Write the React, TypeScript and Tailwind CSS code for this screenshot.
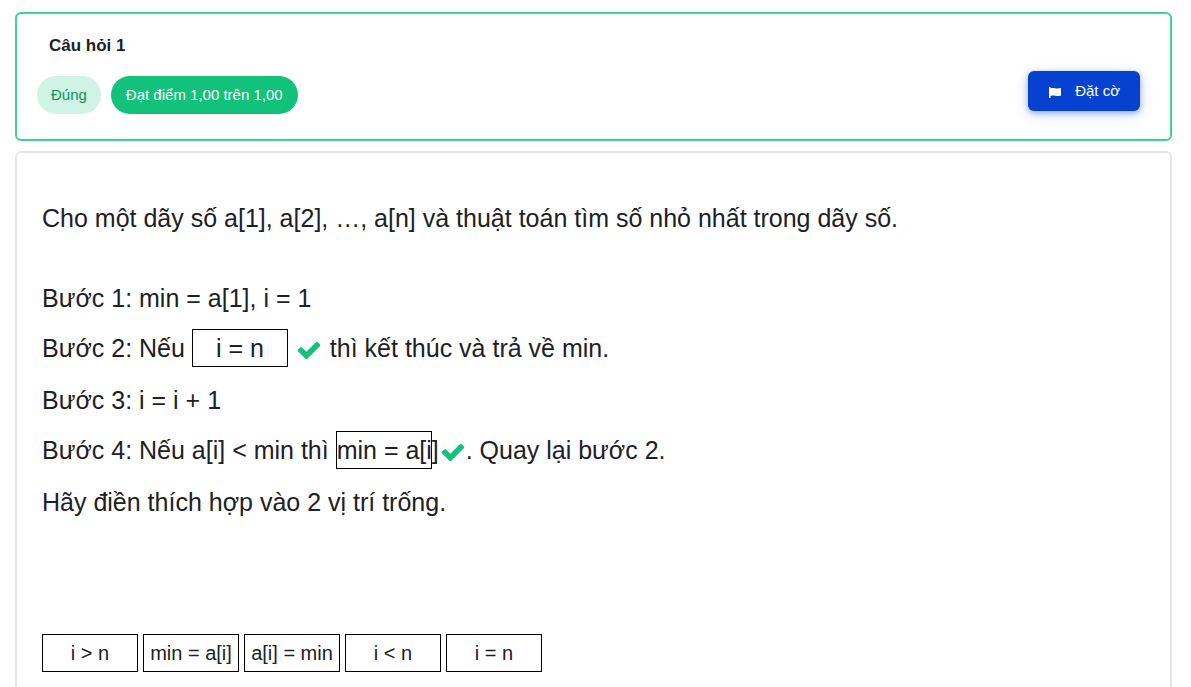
import type { ReactNode } from "react";

const choices = ["i > n", "min = a[i]", "a[i] = min", "i < n", "i = n"];

function Blank({ children }: { children: ReactNode }) {
  return (
    <span className="inline-block h-[38px] w-24 border border-black text-center leading-9 whitespace-nowrap">
      {children}
    </span>
  );
}

function Correct() {
  return (
    <svg
      viewBox="0 0 1792 1792"
      role="img"
      aria-label="Đúng"
      className="inline size-[26px] align-middle text-[#12c27a]"
      fill="currentColor"
    >
      <path d="M1671 566q0 40-28 68l-724 724-136 136q-28 28-68 28t-68-28l-136-136-362-362q-28-28-28-68t28-68l136-136q28-28 68-28t68 28l294 295 656-657q28-28 68-28t68 28l136 136q28 28 28 68z" />
    </svg>
  );
}

function FlagIcon() {
  return (
    <svg viewBox="0 0 13 14" className="h-[14px] w-[13px]" fill="currentColor" aria-hidden="true">
      <path d="M1 3.500a.8.8 0 0 1 1.600 0v.7c1.600-.4 3-.3 4.400 0 1.900.4 3.700.3 5.500-.1.300-.1.500.1.500.4v6.700c0 .3-.2.500-.5.500-1.700.4-3.600.5-5.300.100-1.600-.4-3.100-.3-4.600.100v1.500c0 .4-.3.600-.8.600s-.8-.2-.8-.6z" />
    </svg>
  );
}

export default function App() {
  return (
    <main className="flex min-h-screen flex-col gap-[10px] bg-white pt-3 pr-[19px] pl-[15px] font-['Liberation_Sans',Arial,sans-serif] text-[#1d2125]">
      <header className="flex items-end justify-between rounded-md border-2 border-[#41d192] pt-5 pr-[30px] pb-[25px] pl-5">
        <div className="flex flex-col gap-[18px]">
          <h1 className="px-3 text-[17px] leading-6 font-bold">Câu hỏi 1</h1>
          <div className="flex gap-[10px] text-[15px] leading-[22px]">
            <span className="rounded-full bg-[#cff3e4] px-[14px] py-2 text-[#0e9159]">Đúng</span>
            <span className="rounded-full bg-[#12c27a] px-[15px] py-2 text-white">Đạt điểm 1,00 trên 1,00</span>
          </div>
        </div>
        <button
          type="button"
          className="mb-[3px] flex h-10 items-center gap-[14px] rounded-md bg-[#0641d0] px-5 text-[15px] text-white shadow-[0_2px_6px_#0641d066,0_4px_16px_#0641d022]"
        >
          <FlagIcon />
          Đặt cờ
        </button>
      </header>

      <section className="grow rounded-t-md border-2 border-b-0 border-[#e6e6e6] px-[25px] pt-10 text-[25px] leading-[50px]">
        <p>Cho một dãy số a[1], a[2], …, a[n] và thuật toán tìm số nhỏ nhất trong dãy số.</p>
        <p className="mt-[30px]">Bước 1: min = a[1], i = 1</p>
        <p className="pb-0.5">
          Bước 2: Nếu <Blank>i = n</Blank>
          <span className="px-2"><Correct /></span>
          thì kết thúc và trả về min.
        </p>
        <p>Bước 3: i = i + 1</p>
        <p className="pb-0.5">
          Bước 4: Nếu a[i] &lt; min thì <Blank>min = a[i]</Blank>
          <span className="pl-2"><Correct /></span>. Quay lại bước 2.
        </p>
        <p>Hãy điền thích hợp vào 2 vị trí trống.</p>
        <div className="mt-[107px] flex gap-[5px] text-xl">
          {choices.map((choice) => (
            <span key={choice} className="flex h-[38px] w-24 items-center justify-center border border-black whitespace-nowrap">
              {choice}
            </span>
          ))}
        </div>
      </section>
    </main>
  );
}
